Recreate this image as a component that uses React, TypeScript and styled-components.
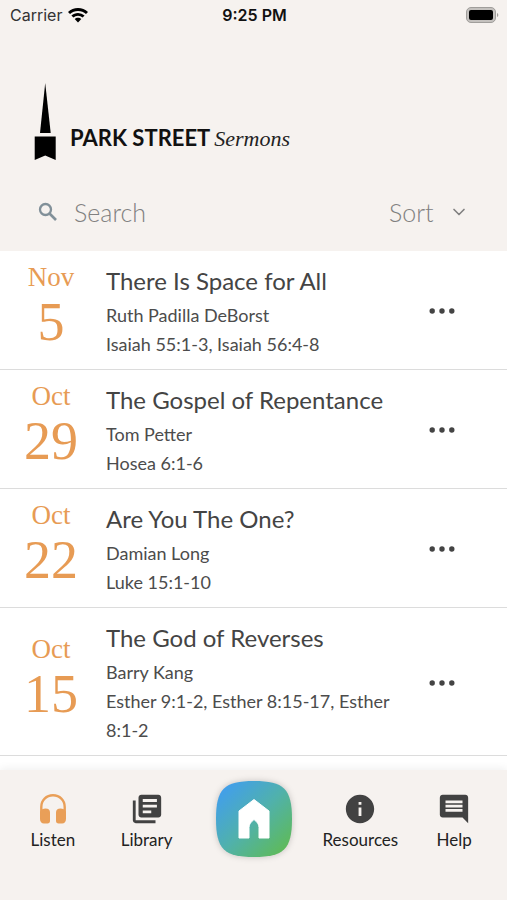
import React from "react";
import styled, { createGlobalStyle } from "styled-components";
import { MdComment, MdInfo, MdLibraryBooks } from "react-icons/md";
import { ChevronDown } from "lucide-react";

const sans = `Lato, "Open Sans", sans-serif`;
const serif = `"Liberation Serif", "Times New Roman", serif`;
const system = `Inter, "Liberation Sans", sans-serif`;

const GlobalStyle = createGlobalStyle`
  *, *::before, *::after { box-sizing: border-box; }
  body { margin: 0; background: #fff; color: #444; font-family: ${sans}; }
  h1, h2, p, ul { margin: 0; padding: 0; }
  button, input, select { font: inherit; color: inherit; }
`;

const Screen = styled.div`
  display: flex;
  flex-direction: column;
  min-height: 100vh;
`;

const Header = styled.header`
  display: flex;
  flex-direction: column;
  background: #f6f2ef;
  padding-bottom: 14px;
`;

const StatusBar = styled.div`
  display: grid;
  grid-template-columns: 1fr auto 1fr;
  align-items: center;
  height: 30px;
  padding: 0 8px 0 10px;
  font-family: ${system};
  font-size: 16px;
  color: #333;
`;

const Carrier = styled.span`
  display: flex;
  align-items: center;
  gap: 6px;
`;

const Clock = styled.time`
  font-weight: 600;
  color: #111;
`;

const BatterySlot = styled.span`
  display: flex;
  justify-content: flex-end;
`;

const Brand = styled.h1`
  display: flex;
  align-items: flex-end;
  gap: 14px;
  margin: 53px 34px 0;
  font-size: 22px;
  line-height: 28px;
  font-weight: 700;
  color: #111;
`;

const BrandText = styled.span`
  display: flex;
  align-items: baseline;
  gap: 4px;
  padding-bottom: 8px;
  white-space: nowrap;
`;

const BrandScript = styled.em`
  font-family: ${serif};
  font-size: 22px;
  font-weight: 400;
  color: #222;
`;

const Filters = styled.form`
  display: flex;
  align-items: center;
  justify-content: space-between;
  margin-top: 26px;
  padding: 0 38px 0 36px;
  height: 50px;
  font-size: 25px;
  font-weight: 300;
  color: #808080;
`;

const SearchField = styled.label`
  display: flex;
  flex: 1;
  align-items: center;
  gap: 14px;
  min-width: 0;
  color: #819099;
`;

const SearchInput = styled.input`
  flex: 1;
  min-width: 0;
  padding: 0;
  border: 0;
  background: transparent;
  color: #808080;
  outline-offset: 4px;

  &::placeholder { color: #808080; opacity: 1; }
`;

const SortField = styled.label`
  display: flex;
  align-items: center;
  gap: 15px;
`;

const SortSelect = styled.select`
  appearance: none;
  padding: 0;
  border: 0;
  background: transparent;
  color: #808080;
`;

const SermonList = styled.ul`
  list-style: none;
`;

const SermonRow = styled.li`
  display: grid;
  grid-template-columns: 102px 1fr 100px;
  align-items: center;
  padding: 12px 15px 10px 0;
  border-bottom: 1px solid #dcdcdc;
`;

const SermonDate = styled.time`
  display: flex;
  flex-direction: column;
  align-items: center;
  padding-bottom: 4px;
  font-family: ${serif};
  color: #e79b54;
`;

const Month = styled.span`
  font-size: 27px;
  line-height: 26px;
`;

const Day = styled.span`
  font-size: 54px;
  line-height: 64px;
`;

const Details = styled.div`
  padding-left: 4px;
`;

const Title = styled.h2`
  padding-bottom: 2px;
  font-size: 24px;
  font-weight: 400;
  line-height: 36px;
  color: #444;
`;

const Detail = styled.p`
  font-size: 18px;
  line-height: 29px;
  color: #4c4c4c;
`;

const MoreButton = styled.button`
  display: grid;
  place-items: center;
  justify-self: center;
  width: 44px;
  height: 44px;
  padding: 0;
  border: 0;
  background: transparent;
`;

const TabBar = styled.nav`
  display: grid;
  grid-template-columns: 1fr 1fr 120px 1fr 1fr;
  align-items: start;
  margin-top: auto;
  padding: 10px 6px 42px;
  background: #f6f2ef;
  box-shadow: 0 -2px 8px rgba(0, 0, 0, 0.06);
`;

const Tab = styled.a`
  display: flex;
  flex-direction: column;
  align-items: center;
  gap: 2px;
  padding-top: 12px;
  font-size: 17px;
  line-height: 24px;
  color: #222;
  text-decoration: none;
`;

const TabIcon = styled.span<{ $active?: boolean }>`
  display: grid;
  place-items: center;
  height: 34px;
  color: ${({ $active }) => ($active ? "#e99f58" : "#424242")};
`;

const HomeLink = styled.a`
  justify-self: center;
  height: 78px;
  filter: drop-shadow(0 0 3px rgba(0, 0, 0, 0.2));
`;

const WifiIcon = () => (
  <svg width="20" height="15" viewBox="0 0 20 15" fill="#000" aria-hidden="true">
    <path d="M10 0C6.2 0 2.7 1.500 0 4l2 2.100a11.600 11.600 0 0 1 16 0L20 4C17.300 1.500 13.800 0 10 0Z" />
    <path d="M10 4.900c-2.500 0-4.800 1-6.600 2.600l2 2.100a6.700 6.700 0 0 1 9.200 0l2-2.100A9.700 9.700 0 0 0 10 4.900Z" />
    <path d="M10 9.700c-1.300 0-2.400.5-3.300 1.300L10 14.500l3.300-3.500c-.9-.8-2-1.300-3.300-1.300Z" />
  </svg>
);

const BatteryIcon = () => (
  <svg width="33" height="17" viewBox="0 0 33 17" role="img" aria-label="Battery full">
    <rect x="0.500" y="0.500" width="29" height="15" rx="4.500" fill="#c4c1be" stroke="#a09e9b" />
    <rect x="3" y="3" width="24" height="10" rx="2" fill="#000" />
    <path d="M31 6c1.800.6 1.800 3.400 0 4Z" fill="#a09e9b" />
  </svg>
);

const SteepleLogo = () => (
  <svg width="22" height="78" viewBox="0 0 22 78" fill="#000" aria-hidden="true">
    <path d="M11.200 0 16.700 50H6Z" />
    <path d="M.7 53.500h21V77l-10.500-4.500L.7 77Z" />
  </svg>
);

const SearchIcon = () => (
  <svg width="24" height="24" viewBox="0 0 24 24" fill="none" stroke="currentColor" strokeWidth="2.300" aria-hidden="true">
    <circle cx="9.500" cy="9.500" r="5.500" />
    <path d="M13.500 13.500 20 20" strokeWidth="2.600" />
  </svg>
);

const HeadphonesIcon = () => (
  <svg width="26" height="30" viewBox="0 0 26 30" aria-hidden="true">
    <path d="M1.300 21V13C1.300 6.300 6.300 1.300 13 1.300S24.700 6.300 24.700 13v8" fill="none" stroke="currentColor" strokeWidth="2.400" />
    <path d="M0 18c1-2.500 3.200-3.500 5.500-3.500C8.500 14.500 10 16 10 18.500V27c0 1.600-.9 2.500-2.500 2.500H4C1.500 29.500 0 27.500 0 25Z" fill="currentColor" />
    <path d="M26 18c-1-2.500-3.200-3.500-5.500-3.500-3 0-4.500 1.500-4.500 4V27c0 1.600.9 2.500 2.500 2.500H22c2.500 0 4-2 4-4.500Z" fill="currentColor" />
  </svg>
);

const HomeIcon = () => (
  <svg width="78" height="78" viewBox="0 0 78 78" aria-hidden="true">
    <defs>
      <linearGradient id="homeFill" x1="0.100" y1="0.100" x2="0.900" y2="0.900">
        <stop offset="0" stopColor="#429fea" />
        <stop offset="0.500" stopColor="#50b1ac" />
        <stop offset="1" stopColor="#5eba5c" />
      </linearGradient>
    </defs>
    <path d="M39 1C69 1 77 9 77 39S69 77 39 77 1 69 1 39 9 1 39 1Z" fill="url(#homeFill)" />
    <path d="M39 19.500 54 31V58H44V47.500c0-3.500-2-5.500-5-8-3 2.500-5 4.500-5 8V58H24V31Z" fill="#fff" stroke="#fff" strokeWidth="1" strokeLinejoin="round" />
  </svg>
);

const DotsIcon = () => (
  <svg width="26" height="6" viewBox="0 0 26 6" fill="#444" aria-hidden="true">
    <circle cx="3.200" cy="3" r="2.700" />
    <circle cx="13" cy="3" r="2.700" />
    <circle cx="22.800" cy="3" r="2.700" />
  </svg>
);

const sermons = [
  { month: "Nov", day: "5", title: "There Is Space for All", speaker: "Ruth Padilla DeBorst", passage: "Isaiah 55:1-3, Isaiah 56:4-8" },
  { month: "Oct", day: "29", title: "The Gospel of Repentance", speaker: "Tom Petter", passage: "Hosea 6:1-6" },
  { month: "Oct", day: "22", title: "Are You The One?", speaker: "Damian Long", passage: "Luke 15:1-10" },
  { month: "Oct", day: "15", title: "The God of Reverses", speaker: "Barry Kang", passage: "Esther 9:1-2, Esther 8:15-17, Esther 8:1-2" },
];

export default function App() {
  return (
    <Screen>
      <GlobalStyle />
      <Header>
        <StatusBar>
          <Carrier>Carrier <WifiIcon /></Carrier>
          <Clock>9:25 PM</Clock>
          <BatterySlot><BatteryIcon /></BatterySlot>
        </StatusBar>
        <Brand>
          <SteepleLogo />
          <BrandText>PARK STREET <BrandScript>Sermons</BrandScript></BrandText>
        </Brand>
        <Filters onSubmit={(e) => e.preventDefault()}>
          <SearchField>
            <SearchIcon />
            <SearchInput type="search" placeholder="Search" aria-label="Search" />
          </SearchField>
          <SortField>
            <SortSelect aria-label="Sort" defaultValue="sort">
              <option value="sort">Sort</option>
            </SortSelect>
            <ChevronDown size={20} aria-hidden="true" />
          </SortField>
        </Filters>
      </Header>
      <main>
        <SermonList>
          {sermons.map((s) => (
            <SermonRow key={s.title}>
              <SermonDate>
                <Month>{s.month}</Month>
                <Day>{s.day}</Day>
              </SermonDate>
              <Details>
                <Title>{s.title}</Title>
                <Detail>{s.speaker}</Detail>
                <Detail>{s.passage}</Detail>
              </Details>
              <MoreButton type="button" aria-label={`More options for ${s.title}`}>
                <DotsIcon />
              </MoreButton>
            </SermonRow>
          ))}
        </SermonList>
      </main>
      <TabBar aria-label="Main">
        <Tab href="#listen" aria-current="page">
          <TabIcon $active><HeadphonesIcon /></TabIcon>
          Listen
        </Tab>
        <Tab href="#library">
          <TabIcon><MdLibraryBooks size={34} /></TabIcon>
          Library
        </Tab>
        <HomeLink href="#home" aria-label="Home"><HomeIcon /></HomeLink>
        <Tab href="#resources">
          <TabIcon><MdInfo size={34} /></TabIcon>
          Resources
        </Tab>
        <Tab href="#help">
          <TabIcon><MdComment size={34} /></TabIcon>
          Help
        </Tab>
      </TabBar>
    </Screen>
  );
}
